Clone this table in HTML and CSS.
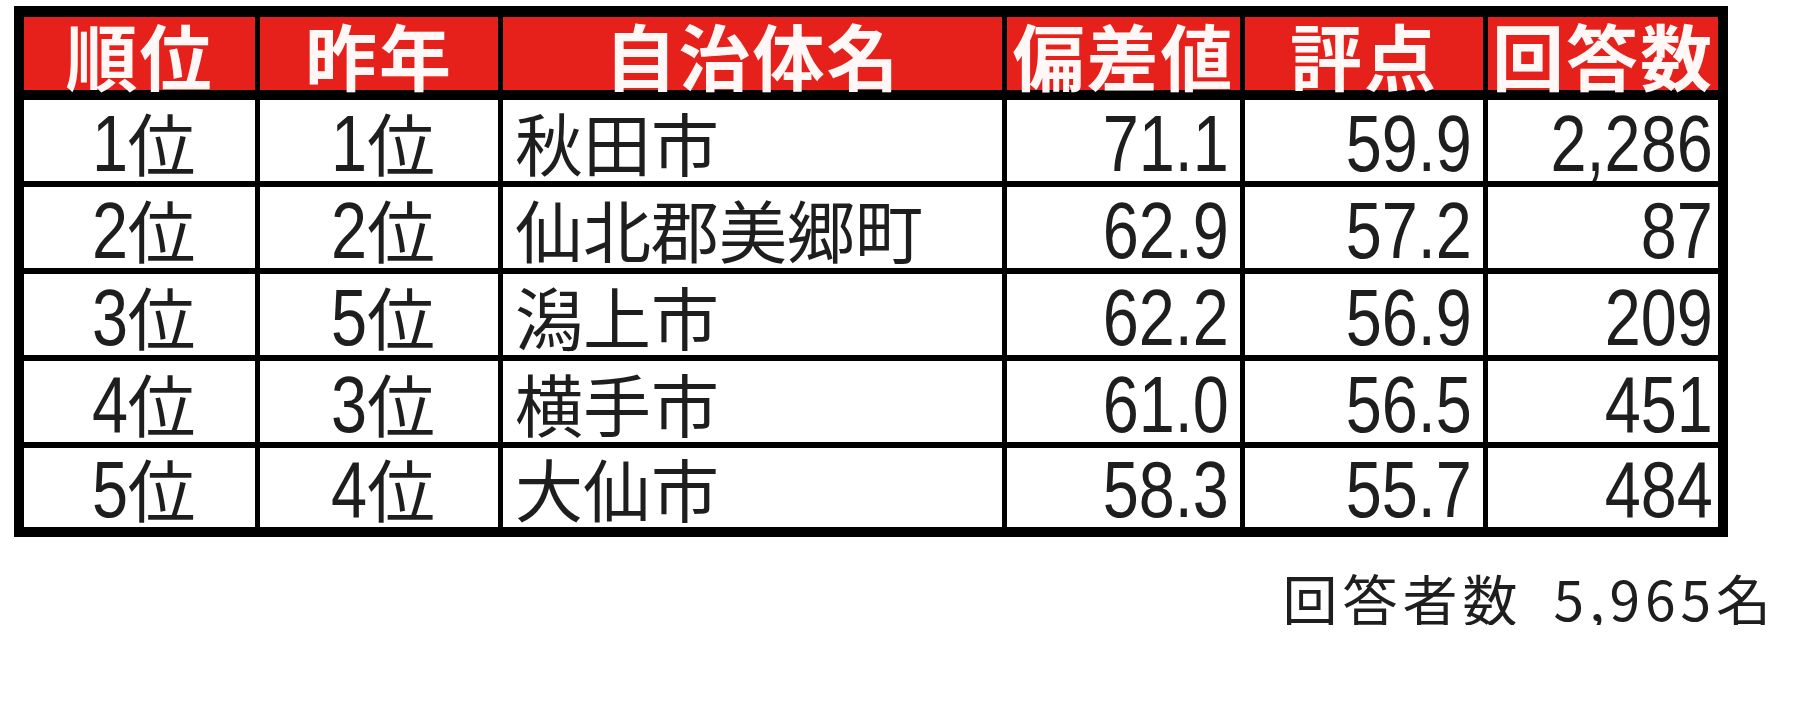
FILE: index.html
```html
<!DOCTYPE html>
<html lang="ja">
<head>
<meta charset="utf-8">
<title>ランキング</title>
<link rel="stylesheet" href="styles.css">
</head>
<body>
<div class="page">
  <div class="rank-table">
    <div class="head">順位</div>
    <div class="head">昨年</div>
    <div class="head">自治体名</div>
    <div class="head">偏差値</div>
    <div class="head">評点</div>
    <div class="head">回答数</div>

    <div class="cell center"><span class="digit">1</span>位</div>
    <div class="cell center"><span class="digit">1</span>位</div>
    <div class="cell name">秋田市</div>
    <div class="cell num"><span class="digit">71.1</span></div>
    <div class="cell num"><span class="digit">59.9</span></div>
    <div class="cell num last"><span class="digit">2,286</span></div>

    <div class="cell center"><span class="digit">2</span>位</div>
    <div class="cell center"><span class="digit">2</span>位</div>
    <div class="cell name">仙北郡美郷町</div>
    <div class="cell num"><span class="digit">62.9</span></div>
    <div class="cell num"><span class="digit">57.2</span></div>
    <div class="cell num last"><span class="digit">87</span></div>

    <div class="cell center"><span class="digit">3</span>位</div>
    <div class="cell center"><span class="digit">5</span>位</div>
    <div class="cell name">潟上市</div>
    <div class="cell num"><span class="digit">62.2</span></div>
    <div class="cell num"><span class="digit">56.9</span></div>
    <div class="cell num last"><span class="digit">209</span></div>

    <div class="cell center"><span class="digit">4</span>位</div>
    <div class="cell center"><span class="digit">3</span>位</div>
    <div class="cell name">横手市</div>
    <div class="cell num"><span class="digit">61.0</span></div>
    <div class="cell num"><span class="digit">56.5</span></div>
    <div class="cell num last"><span class="digit">451</span></div>

    <div class="cell center"><span class="digit">5</span>位</div>
    <div class="cell center"><span class="digit">4</span>位</div>
    <div class="cell name">大仙市</div>
    <div class="cell num"><span class="digit">58.3</span></div>
    <div class="cell num"><span class="digit">55.7</span></div>
    <div class="cell num last"><span class="digit">484</span></div>
  </div>
  <p class="total">回答者数<span class="total-num">5,965名</span></p>
</div>
</body>
</html>
```
FILE: styles.css
```css
html, body {
  margin: 0;
  background: #fff;
}

.page {
  width: 1762px;
  padding: 6px 0 0 14px;
}

.rank-table {
  display: grid;
  grid-template-columns: 231px 238px 499px 233px 238px 230px;
  grid-template-rows: 77px repeat(4, 81px) 79px;
  column-gap: 5px;
  row-gap: 6px;
  width: max-content;
  background: #000;
  border: 10px solid #000;
  border-top-width: 11px;
}

.head {
  margin-bottom: 4px;
  background: #e6201a;
  color: #fff8f6;
  font: 700 72px/73px "Noto Sans CJK JP", sans-serif;
  letter-spacing: 2px;
  text-align: center;
}

.cell {
  display: flex;
  align-items: flex-end;
  background: #fff;
  color: #1e1e1e;
  font: 400 68px/79px "Noto Sans CJK JP", sans-serif;
}

.center {
  justify-content: center;
}

.name {
  padding-left: 12px;
}

.digit {
  display: inline-block;
  font: 79px/75px "Liberation Sans", Arial, sans-serif;
  transform: scaleX(0.82);
  transform-origin: right bottom;
}

.num {
  justify-content: flex-end;
  padding-right: 11px;
}

.num.last {
  padding-right: 5px;
}

.total {
  margin: 33px 0 0;
  text-align: right;
  color: #1e1e1e;
  font: 400 55px/55px "Noto Sans CJK JP", sans-serif;
  letter-spacing: 5px;
}

.total-num {
  margin-left: 31px;
}
```
